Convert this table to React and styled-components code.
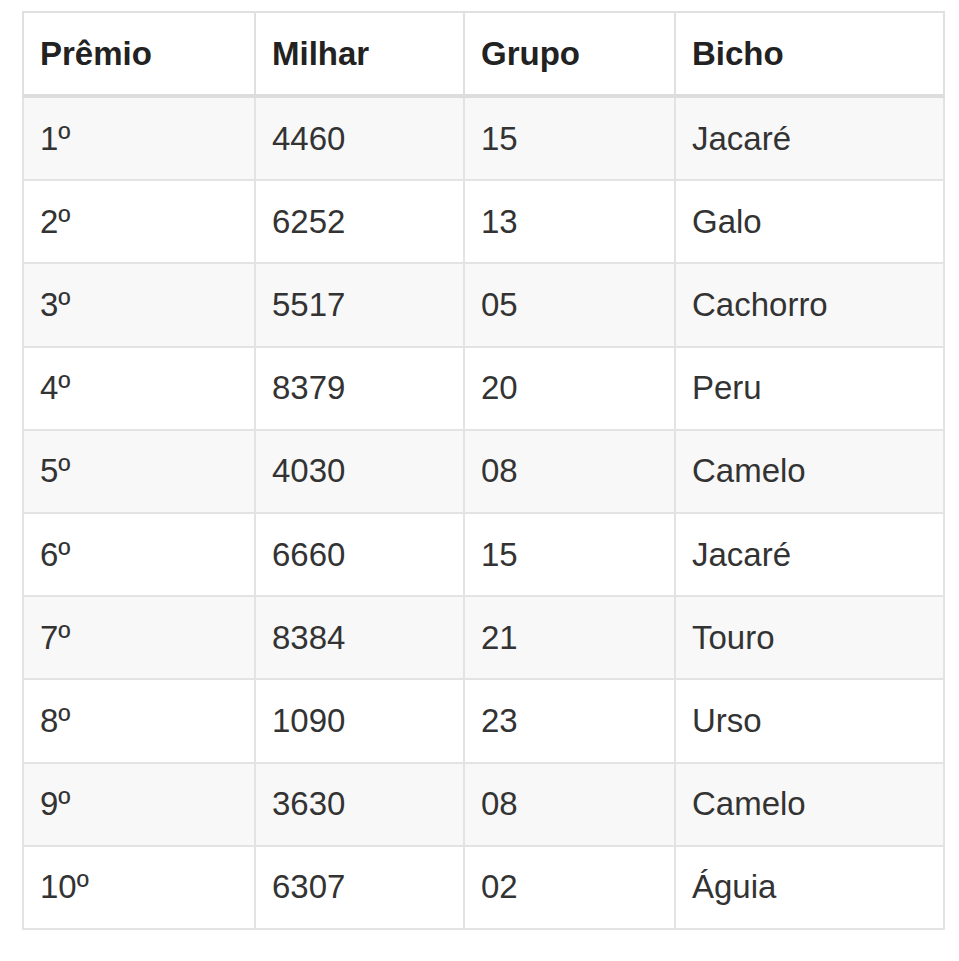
import React from 'react';
import styled, { createGlobalStyle } from 'styled-components';

const GlobalStyle = createGlobalStyle`
  html, body {
    margin: 0;
    padding: 0;
    background: #ffffff;
  }
  body {
    font-family: 'Liberation Sans', Arial, sans-serif;
    color: #333333;
  }
`;

const Page = styled.div`
  padding: 11px 16px 0 22px;
`;

const Table = styled.table`
  width: 921px;
  border-collapse: collapse;
  border: 2px solid #e0e0e0;
  table-layout: fixed;
  font-size: 33px;
`;

const HeadCell = styled.th`
  text-align: left;
  font-weight: 700;
  color: #222222;
  height: 81px;
  padding: 0 16px;
  border: 2px solid #e0e0e0;
  border-bottom: 4px solid #dddddd;
  vertical-align: middle;
`;

const Row = styled.tr`
  background: ${({ $striped }) => ($striped ? '#f8f8f8' : '#ffffff')};
`;

const Cell = styled.td`
  height: 81.2px;
  padding: 0 16px;
  border: 2px solid #e3e3e3;
  vertical-align: middle;
  color: #333333;
`;

const columns = [
  { label: 'Prêmio', width: 232 },
  { label: 'Milhar', width: 209 },
  { label: 'Grupo', width: 211 },
  { label: 'Bicho', width: 269 },
];

const results = [
  ['1º', '4460', '15', 'Jacaré'],
  ['2º', '6252', '13', 'Galo'],
  ['3º', '5517', '05', 'Cachorro'],
  ['4º', '8379', '20', 'Peru'],
  ['5º', '4030', '08', 'Camelo'],
  ['6º', '6660', '15', 'Jacaré'],
  ['7º', '8384', '21', 'Touro'],
  ['8º', '1090', '23', 'Urso'],
  ['9º', '3630', '08', 'Camelo'],
  ['10º', '6307', '02', 'Águia'],
];

export default function App() {
  return (
    <>
      <GlobalStyle />
      <Page>
        <Table>
          <colgroup>
            {columns.map((c) => (
              <col key={c.label} style={{ width: c.width }} />
            ))}
          </colgroup>
          <thead>
            <tr>
              {columns.map((c) => (
                <HeadCell key={c.label}>{c.label}</HeadCell>
              ))}
            </tr>
          </thead>
          <tbody>
            {results.map((r, i) => (
              <Row key={r[0]} $striped={i % 2 === 0}>
                {r.map((v, j) => (
                  <Cell key={j}>{v}</Cell>
                ))}
              </Row>
            ))}
          </tbody>
        </Table>
      </Page>
    </>
  );
}
